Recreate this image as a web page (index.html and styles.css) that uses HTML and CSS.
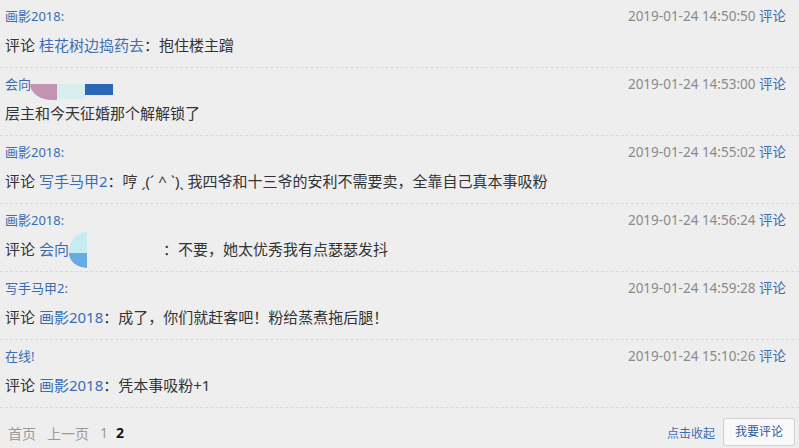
FILE: index.html
```html
<!DOCTYPE html>
<html lang="zh">
<head>
<meta charset="utf-8">
<link rel="stylesheet" href="styles.css">
</head>
<body>
<div class="list">
  <div class="item">
    <div class="head"><span class="author">画影2018:</span><span class="meta"><span class="time">2019-01-24 14:50:50</span> <a class="reply">评论</a></span></div>
    <div class="body">评论 <a class="name">桂花树边捣药去</a>：抱住楼主蹭</div>
  </div>
  <div class="item">
    <div class="head"><span class="author">会向<span class="pic-a"><i class="pa1"></i><i class="pa2"></i><i class="pa3"></i></span></span><span class="meta"><span class="time">2019-01-24 14:53:00</span> <a class="reply">评论</a></span></div>
    <div class="body">层主和今天征婚那个解解锁了</div>
  </div>
  <div class="item">
    <div class="head"><span class="author">画影2018:</span><span class="meta"><span class="time">2019-01-24 14:55:02</span> <a class="reply">评论</a></span></div>
    <div class="body">评论 <a class="name">写手马甲2</a>：哼 ˏ(ˊ ^ ˋ)ˎ 我四爷和十三爷的安利不需要卖，全靠自己真本事吸粉</div>
  </div>
  <div class="item">
    <div class="head"><span class="author">画影2018:</span><span class="meta"><span class="time">2019-01-24 14:56:24</span> <a class="reply">评论</a></span></div>
    <div class="body">评论 <a class="name">会向<span class="pic-b"><i class="pb1"></i><i class="pb2"></i></span></a>：不要，她太优秀我有点瑟瑟发抖</div>
  </div>
  <div class="item">
    <div class="head"><span class="author">写手马甲2:</span><span class="meta"><span class="time">2019-01-24 14:59:28</span> <a class="reply">评论</a></span></div>
    <div class="body">评论 <a class="name">画影2018</a>：成了，你们就赶客吧！粉给蒸煮拖后腿！</div>
  </div>
  <div class="item">
    <div class="head"><span class="author">在线!</span><span class="meta"><span class="time">2019-01-24 15:10:26</span> <a class="reply">评论</a></span></div>
    <div class="body">评论 <a class="name">画影2018</a>：凭本事吸粉+1</div>
  </div>
</div>
<div class="footer">
  <div class="pager"><span>首页</span><span>上一页</span><span class="num">1</span><span class="cur">2</span></div>
  <div class="actions"><a class="fold">点击收起</a><a class="btn">我要评论</a></div>
</div>
</body>
</html>
```
FILE: styles.css
```css
html, body {
  margin: 0;
  padding: 0;
  background: #eeeeee;
}
body {
  width: 799px;
  height: 448px;
  overflow: hidden;
  font-family: "Noto Sans", "Noto Sans CJK SC", sans-serif;
  color: #333;
}
a { color: #3a6db5; text-decoration: none; }
.list { display: flex; flex-direction: column; }
.item {
  padding: 7px 13px 12px 5px;
  border-bottom: 1px dashed #d9d9d9;
}
.head {
  display: flex;
  justify-content: space-between;
  align-items: flex-start;
  height: 18px;
  line-height: 18px;
  font-size: 13px;
}
.author { color: #3a6db5; display: inline-flex; align-items: flex-start; }
.meta { font-size: 13.5px; }
.time { color: #8a8a8a; }
.reply { color: #3a6db5; }
.body {
  margin-top: 10px;
  height: 20px;
  line-height: 20px;
  font-size: 15px;
  white-space: nowrap;
}
.pic-a {
  display: inline-flex;
  align-items: flex-start;
  margin-top: 9px;
  margin-left: -1px;
}
.pic-a i { display: block; }
.pa1 { width: 27px; height: 16px; background: #c393b3; border-bottom-left-radius: 22px 16px; }
.pa2 { width: 28px; height: 15px; background: #d8eeec; border-bottom-right-radius: 4px 2px; }
.pa3 { width: 28px; height: 11px; background: #2a67b6; }
.pic-b {
  display: inline-flex;
  flex-direction: column;
  width: 94px;
  height: 36px;
  margin: -9px 0 -7px;
  vertical-align: middle;
}
.pic-b i { display: block; width: 18px; }
.pb1 { height: 21px; background: #c5ecee; border-top-left-radius: 18px 20px; }
.pb2 { height: 15px; background: #67abe0; border-bottom-left-radius: 18px 15px; }
.footer {
  display: flex;
  justify-content: space-between;
  align-items: center;
  padding: 10px 4px 0 8px;
}
.pager { display: flex; gap: 11px; font-size: 14px; color: #9a9a9a; margin-top: 1px; }
.pager .num { margin-right: -3px; }
.pager .cur { color: #111; font-weight: bold; }
.actions { display: flex; align-items: center; gap: 8px; }
.fold { font-size: 12px; color: #3a6db5; margin-top: 2px; }
.btn {
  display: block;
  font-size: 12px;
  color: #2d5d9e;
  background: #f9f9f9;
  border: 1px solid #cfcfcf;
  border-radius: 3px;
  padding: 5px 11px;
  line-height: 16px;
}
```
